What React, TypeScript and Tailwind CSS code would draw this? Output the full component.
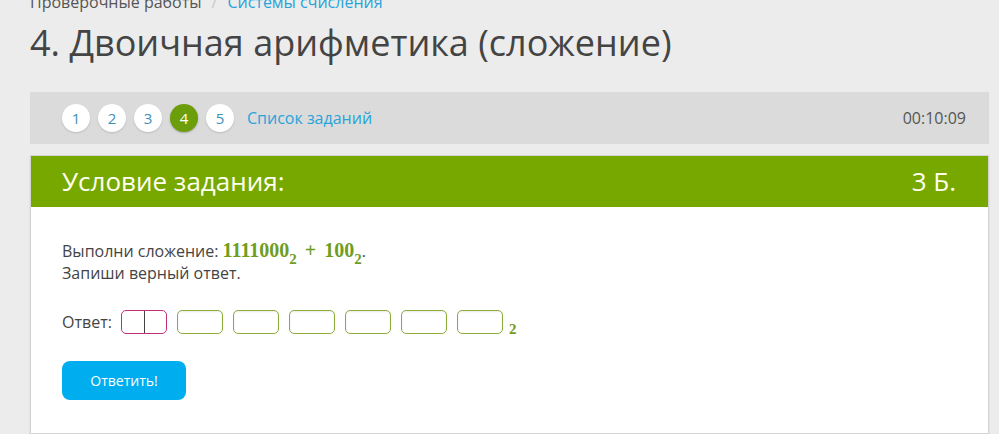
const steps = [1, 2, 3, 4, 5];
const current = 4;

function Num({ v }: { v: string }) {
  return (
    <span className="font-['Liberation_Serif',serif] text-[20px] font-semibold text-[#6f9d1f]">
      {v}
      <sub className="relative top-[2px] text-[15px] align-sub">2</sub>
    </span>
  );
}

export default function App() {
  return (
    <div className="min-h-[443px] bg-[#ececec] pl-[30px] pr-[10px] font-['Open_Sans',sans-serif] text-[#444]">
      <div className="-mt-[9px] flex h-[22px] items-center gap-[10px] text-[16px] leading-[22px]">
        <span className="text-[#555]">Проверочные работы</span>
        <span className="text-[#c8c8c8]">/</span>
        <span className="text-[#29a3d9]">Системы счисления</span>
      </div>

      <h1 className="mt-[8px] text-[36px] leading-[44px] text-[#444]">
        4. Двоичная арифметика (сложение)
      </h1>

      <div className="mt-[27px] flex h-[52px] items-center justify-between bg-[#dbdbdb] pl-[32px] pr-[23px]">
        <div className="flex items-center gap-[8px]">
          {steps.map((s) => (
            <div
              key={s}
              className={
                s === current
                  ? "flex h-[28px] w-[28px] items-center justify-center rounded-full bg-[#6c9e0c] text-[15px] text-white shadow-[0_1px_2px_rgba(0,0,0,0.25)]"
                  : "flex h-[28px] w-[28px] items-center justify-center rounded-full bg-white text-[15px] text-[#3d8fb8] shadow-[0_1px_2px_rgba(0,0,0,0.15)]"
              }
            >
              {s}
            </div>
          ))}
          <span className="ml-[5px] text-[16px] text-[#29a3d9]">Список заданий</span>
        </div>
        <span className="text-[16px] text-[#555]">00:10:09</span>
      </div>

      <div className="mt-[11px] border border-[#d4d4d4] bg-white shadow-[0_1px_2px_rgba(0,0,0,0.1)]">
        <div className="flex h-[51px] items-center justify-between bg-[#76a800] pl-[31px] pr-[32px] text-[26px] text-[#fffff0]">
          <span>Условие задания:</span>
          <span>3 Б.</span>
        </div>

        <div className="px-[31px] pb-[33px] pt-[32px]">
          <p className="text-[16px] leading-[22px]">
            Выполни сложение: <Num v="1111000" />
            <span className="mx-[8px] inline-block font-['Liberation_Serif',serif] text-[20px] font-semibold text-[#6f9d1f]">+</span>
            <Num v="100" />.
          </p>
          <p className="text-[16px] leading-[22px]">Запиши верный ответ.</p>

          <div className="mt-[20px] flex items-center">
            <span className="mr-[9px] text-[16px]">Ответ:</span>
            <div className="flex items-center gap-[10px]">
              <div className="relative h-[24px] w-[46px] rounded-[5px] border border-[#c0307a]">
                <div className="absolute left-[22px] top-0 h-[22px] w-px bg-[#444]" />
              </div>
              {[0, 1, 2, 3, 4, 5].map((i) => (
                <div
                  key={i}
                  className="h-[24px] w-[46px] rounded-[5px] border border-[#8cad3a] shadow-[inset_0_1px_2px_rgba(0,0,0,0.08)]"
                />
              ))}
            </div>
            <span className="ml-[6px] mt-[14px] font-['Liberation_Serif',serif] text-[15px] font-semibold text-[#6f9d1f]">2</span>
          </div>

          <button className="mt-[20px] flex h-[39px] w-[124px] items-center justify-center rounded-[8px] bg-[#00aeef] text-[14px] text-white">
            Ответить!
          </button>
        </div>
      </div>
    </div>
  );
}
